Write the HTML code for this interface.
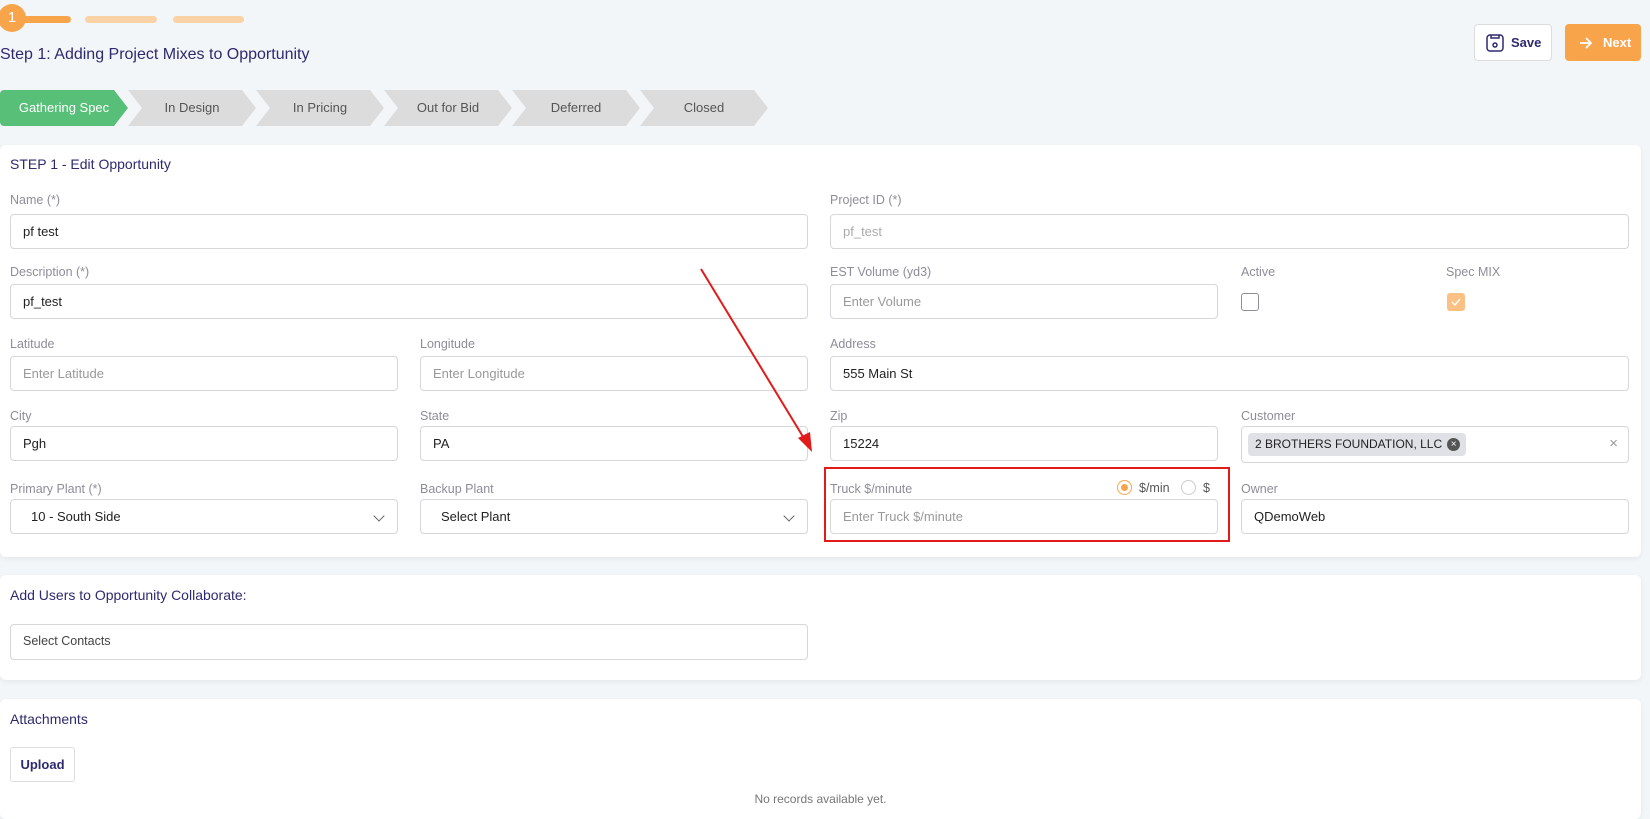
<!DOCTYPE html>
<html><head><meta charset="utf-8"><style>
*{box-sizing:border-box;margin:0;padding:0}
body{width:1650px;height:812px;overflow:hidden;background:#f3f6f9;font-family:"Liberation Sans",sans-serif;position:relative;color:#222}
.a{position:absolute}
.card{position:absolute;left:0;width:1641px;background:#fff;border-radius:6px;box-shadow:0 2px 6px rgba(0,0,0,0.06)}
.lbl{position:absolute;font-size:12.5px;color:#8d8d99}
.inp{position:absolute;height:35px;border:1px solid #d6d6dc;border-radius:4px;background:#fff;font-size:13px;line-height:33px;padding-left:12px;color:#222}
.ph{color:#999}
.ttl{position:absolute;font-size:14px;color:#2d2a6e}
.chev{position:absolute;top:90px;height:36px;width:128px;font-size:13px;line-height:36px;text-align:center;color:#555;background:#dcdcdc;clip-path:polygon(0 0,114px 0,128px 50%,114px 100%,0 100%,14px 50%)}
.dd{position:absolute;right:14px;top:12px;width:8px;height:8px;border-right:1.5px solid #666;border-bottom:1.5px solid #666;transform:rotate(45deg)}
</style></head><body>
<div class="a" style="left:12px;top:16px;width:59px;height:7px;background:#f8a44b;border-radius:4px"></div>
<div class="a" style="left:-2px;top:4px;width:28px;height:28px;border-radius:50%;background:#f8a44b;color:#fff;font-size:15px;line-height:28px;text-align:center">1</div>
<div class="a" style="left:85px;top:16px;width:72px;height:7px;background:#f9d2a6;border-radius:4px"></div>
<div class="a" style="left:173px;top:16px;width:71px;height:7px;background:#f9d2a6;border-radius:4px"></div>
<div class="a" style="left:0;top:46px;font-size:16px;color:#2d2a6e">Step 1: Adding Project Mixes to Opportunity</div>
<div class="a" style="left:1474px;top:24px;width:78px;height:37px;background:#fff;border:1px solid #ddd;border-radius:4px;font-size:13px;font-weight:bold;color:#2d2a6e;line-height:35px;padding-left:36px">Save
<svg class="a" style="left:11px;top:9px" width="18" height="18" viewBox="0 0 18 18" fill="none" stroke="#2d2a6e" stroke-width="1.5"><rect x="1" y="1" width="16" height="16" rx="3"/><path d="M5 1v3h8V1"/><circle cx="9" cy="11" r="2"/></svg></div>
<div class="a" style="left:1565px;top:24px;width:76px;height:37px;background:#f8a44b;border-radius:4px;font-size:13px;font-weight:bold;color:#fff;line-height:37px;padding-left:38px">Next
<svg class="a" style="left:14px;top:13px" width="13" height="12" viewBox="0 0 13 12" fill="none" stroke="#fff" stroke-width="1.8"><path d="M1 6h11M7 1l5 5-5 5"/></svg></div>
<div class="chev" style="left:0;background:#57bf78;color:#fff;clip-path:polygon(0 0,114px 0,128px 50%,114px 100%,0 100%);border-radius:4px 0 0 4px">Gathering Spec</div>
<div class="chev" style="left:128px">In Design</div>
<div class="chev" style="left:256px">In Pricing</div>
<div class="chev" style="left:384px">Out for Bid</div>
<div class="chev" style="left:512px">Deferred</div>
<div class="chev" style="left:640px">Closed</div>

<div class="card" style="top:145px;height:412px"></div>
<div class="ttl" style="left:10px;top:156px">STEP 1 - Edit Opportunity</div>
<div class="lbl" style="left:10px;top:193px">Name (*)</div>
<div class="inp" style="left:10px;top:214px;width:798px">pf test</div>
<div class="lbl" style="left:830px;top:193px">Project ID (*)</div>
<div class="inp ph" style="left:830px;top:214px;width:799px;color:#aaa">pf_test</div>
<div class="lbl" style="left:10px;top:265px">Description (*)</div>
<div class="inp" style="left:10px;top:284px;width:798px">pf_test</div>
<div class="lbl" style="left:830px;top:265px">EST Volume (yd3)</div>
<div class="inp ph" style="left:830px;top:284px;width:388px">Enter Volume</div>
<div class="lbl" style="left:1241px;top:265px">Active</div>
<div class="a" style="left:1241px;top:293px;width:18px;height:18px;border:1.5px solid #8d8d99;border-radius:3px"></div>
<div class="lbl" style="left:1446px;top:265px">Spec MIX</div>
<div class="a" style="left:1447px;top:293px;width:18px;height:18px;background:#fbc184;border-radius:3px"><svg width="18" height="18"><path d="M5 9l3 3 5-6" fill="none" stroke="#fff" stroke-width="1.4"/></svg></div>
<div class="lbl" style="left:10px;top:337px">Latitude</div>
<div class="inp ph" style="left:10px;top:356px;width:388px">Enter Latitude</div>
<div class="lbl" style="left:420px;top:337px">Longitude</div>
<div class="inp ph" style="left:420px;top:356px;width:388px">Enter Longitude</div>
<div class="lbl" style="left:830px;top:337px">Address</div>
<div class="inp" style="left:830px;top:356px;width:799px">555 Main St</div>
<div class="lbl" style="left:10px;top:409px">City</div>
<div class="inp" style="left:10px;top:426px;width:388px">Pgh</div>
<div class="lbl" style="left:420px;top:409px">State</div>
<div class="inp" style="left:420px;top:426px;width:388px">PA</div>
<div class="lbl" style="left:830px;top:409px">Zip</div>
<div class="inp" style="left:830px;top:426px;width:388px">15224</div>
<div class="lbl" style="left:1241px;top:409px">Customer</div>
<div class="inp" style="left:1241px;top:426px;width:388px;height:37px"><span class="a" style="left:6px;top:6px;height:23px;line-height:23px;background:#dfe1e6;border-radius:4px;padding:0 24px 0 7px;font-size:12px">2 BROTHERS FOUNDATION, LLC<span class="a" style="right:6px;top:5px;width:13px;height:13px;border-radius:50%;background:#555;color:#fff;font-size:10px;line-height:13px;text-align:center">×</span></span><span class="a" style="right:10px;top:0;color:#999;font-size:15px">×</span></div>
<div class="lbl" style="left:10px;top:482px">Primary Plant (*)</div>
<div class="inp" style="left:10px;top:499px;width:388px;padding-left:20px">10 - South Side<div class="dd"></div></div>
<div class="lbl" style="left:420px;top:482px">Backup Plant</div>
<div class="inp" style="left:420px;top:499px;width:388px;padding-left:20px">Select Plant<div class="dd"></div></div>
<div class="lbl" style="left:830px;top:482px">Truck $/minute</div>
<div class="a" style="left:1117px;top:480px;width:15px;height:15px;border-radius:50%;border:1.5px solid #f8a44b"><div class="a" style="left:2.5px;top:2.5px;width:7px;height:7px;border-radius:50%;background:#f8a44b"></div></div>
<div class="lbl" style="left:1139px;top:481px;color:#555">$/min</div>
<div class="a" style="left:1181px;top:480px;width:15px;height:15px;border-radius:50%;border:1px solid #ccc"></div>
<div class="lbl" style="left:1203px;top:481px;color:#555">$</div>
<div class="inp ph" style="left:830px;top:499px;width:388px">Enter Truck $/minute</div>
<div class="lbl" style="left:1241px;top:482px">Owner</div>
<div class="inp" style="left:1241px;top:499px;width:388px">QDemoWeb</div>
<div class="a" style="left:824px;top:467px;width:406px;height:75px;border:2.5px solid #e11a1a"></div>
<svg class="a" style="left:0;top:0" width="1650" height="812"><line x1="701" y1="269" x2="805" y2="440" stroke="#e11a1a" stroke-width="2"/><polygon points="812,452 798,438 810,432" fill="#e11a1a"/></svg>

<div class="card" style="top:575px;height:105px"></div>
<div class="ttl" style="left:10px;top:587px">Add Users to Opportunity Collaborate:</div>
<div class="inp" style="left:10px;top:624px;width:798px;height:36px;font-size:12.5px;color:#444">Select Contacts</div>

<div class="card" style="top:699px;height:120px"></div>
<div class="ttl" style="left:10px;top:711px">Attachments</div>
<div class="a" style="left:10px;top:747px;width:65px;height:35px;border:1px solid #ddd;border-radius:3px;font-size:13px;font-weight:bold;color:#2d2a6e;line-height:33px;text-align:center">Upload</div>
<div class="a" style="left:0;width:1641px;top:792px;text-align:center;font-size:12px;color:#777">No records available yet.</div>
</body></html>
